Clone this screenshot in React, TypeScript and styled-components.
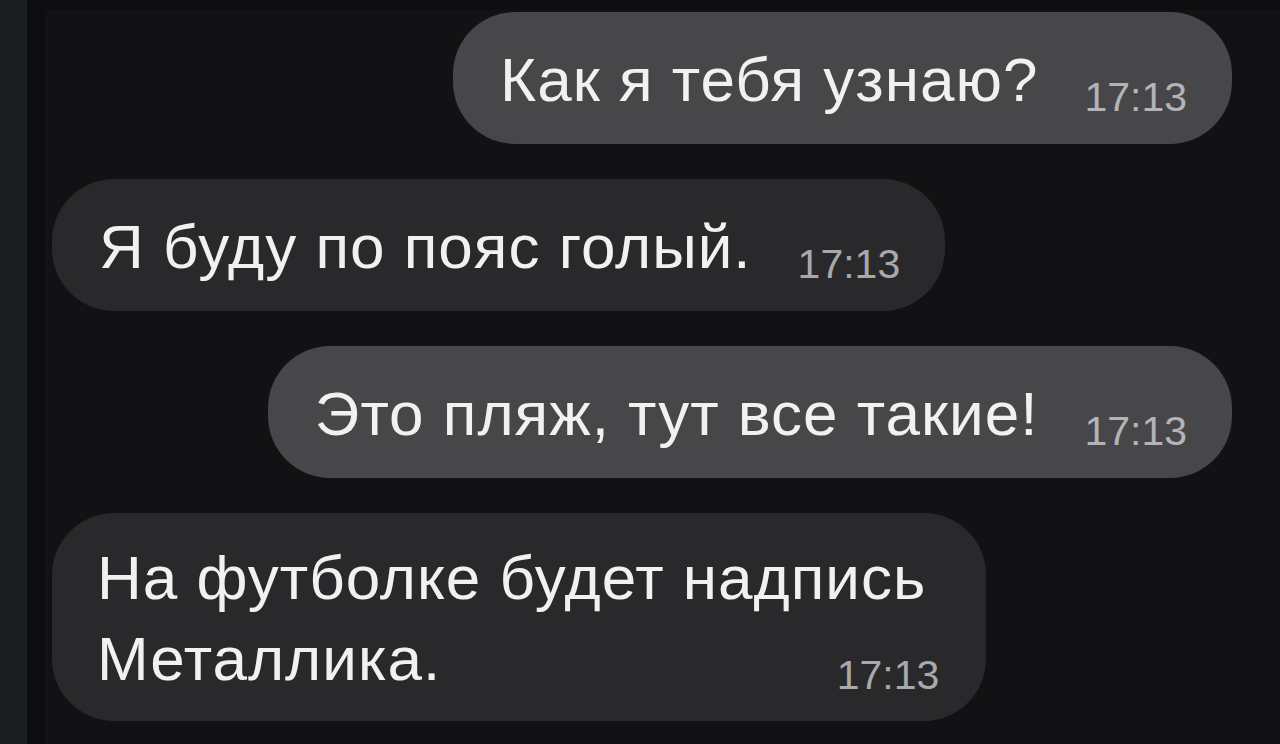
import styled, { createGlobalStyle } from "styled-components";

/**
 * >>> Style
 */
const GlobalStyle = createGlobalStyle`
  html, body {
    margin: 0;
    padding: 0;
    background-color: #121214;
  }
  body {
    font-family: "Liberation Sans", Arial, sans-serif;
  }
`;
const Page = styled.div`
  width: 1280px;
  height: 744px;

  display: flex;

  overflow: hidden;
  background-color: #121214;
`;
const SideStrip = styled.div`
  width: 27px;
  flex-shrink: 0;

  background-color: #1b1e1e;
`;
const Gutter = styled.div`
  width: 18px;
  flex-shrink: 0;

  background-color: #0d0d0f;
`;
const Chat = styled.main`
  flex: 1;

  display: flex;
  flex-direction: column;
  gap: 35px;

  border-top: 10px solid #0d0d10;
  padding: 2px 48px 0 7px;
`;
interface BubbleProps {
  out?: boolean;
  multiline?: boolean;
}
const Bubble = styled.div<BubbleProps>`
  align-self: ${(props) => (props.out ? "flex-end" : "flex-start")};

  display: flex;
  flex-direction: column;

  background-color: ${(props) => (props.out ? "#47474a" : "#29292c")};
  border-radius: 62px;

  padding: ${(props) =>
    props.multiline ? "24px 47px 22px 45px" : "26px 45px 23px 47px"};
`;
const Row = styled.div`
  display: flex;
  align-items: flex-end;
  justify-content: space-between;
  gap: 46px;
`;
const Line = styled.p<BubbleProps>`
  margin: 0;

  font-size: 62px;
  line-height: ${(props) => (props.multiline ? "81px" : "83px")};
  letter-spacing: 1px;
  color: #f1f1f1;
  white-space: nowrap;

  &.lead {
    margin-right: 13px;
  }
`;
const Time = styled.span<BubbleProps>`
  font-size: 41px;
  line-height: 48px;
  color: ${(props) => (props.out ? "#b4b4b7" : "#a9a9ac")};
  white-space: nowrap;
`;
// <<< Style

const messages = [
  { lines: ["Как я тебя узнаю?"], time: "17:13", out: true },
  { lines: ["Я буду по пояс голый."], time: "17:13", out: false },
  { lines: ["Это пляж, тут все такие!"], time: "17:13", out: true },
  {
    lines: ["На футболке будет надпись", "Металлика."],
    time: "17:13",
    out: false,
  },
];

const App = () => {
  return (
    <>
      <GlobalStyle />
      <Page>
        <SideStrip />
        <Gutter />
        <Chat>
          {messages.map((m, i) => {
            const multiline = m.lines.length > 1;
            const head = m.lines.slice(0, -1);
            const last = m.lines[m.lines.length - 1];
            return (
              <Bubble key={i} out={m.out} multiline={multiline}>
                {head.map((line) => (
                  <Line key={line} className="lead" multiline={multiline}>
                    {line}
                  </Line>
                ))}
                <Row>
                  <Line multiline={multiline}>{last}</Line>
                  <Time out={m.out}>{m.time}</Time>
                </Row>
              </Bubble>
            );
          })}
        </Chat>
      </Page>
    </>
  );
};

export default App;
